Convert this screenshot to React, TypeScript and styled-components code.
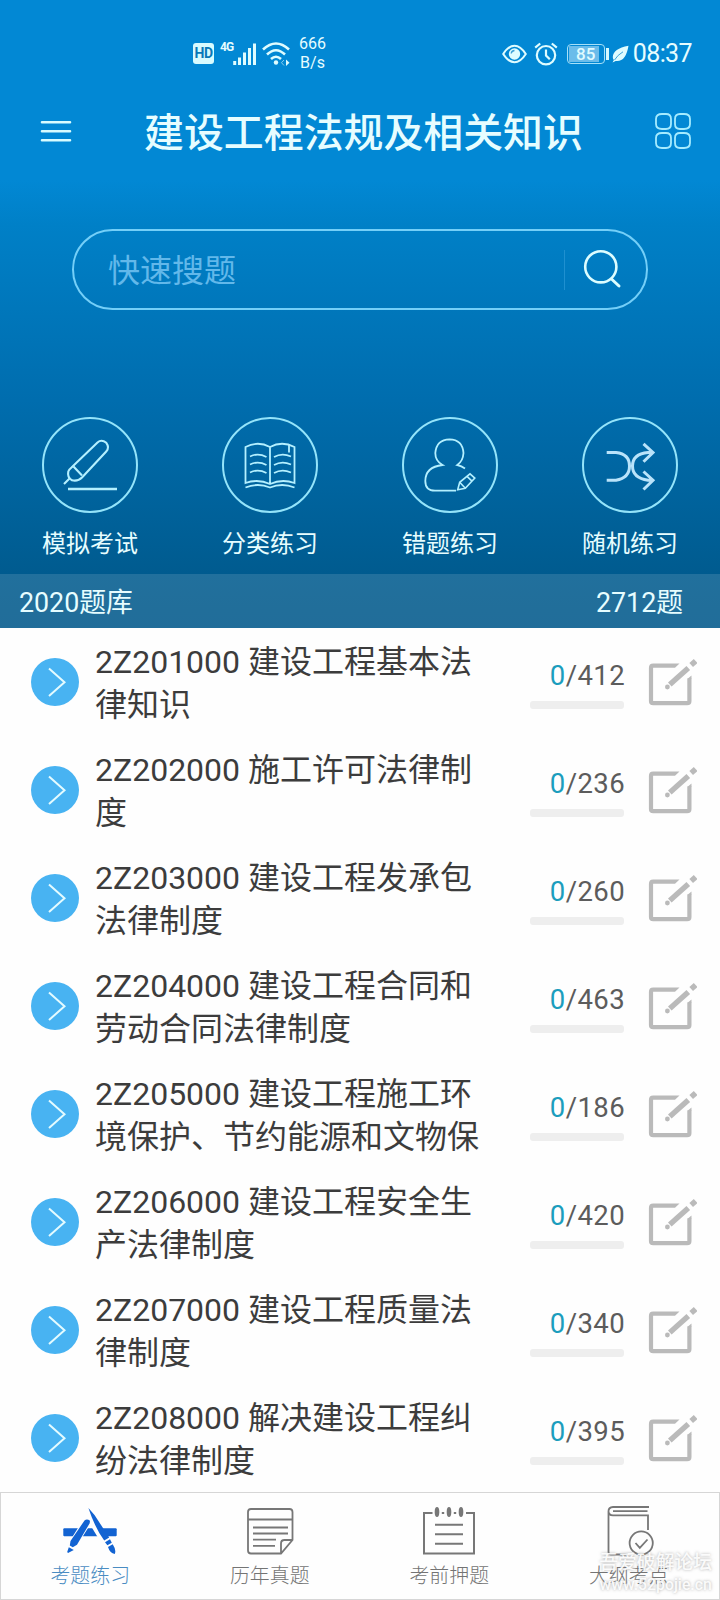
import React from 'react';
import styled, { createGlobalStyle } from 'styled-components';

const Global = createGlobalStyle`
  * { box-sizing: border-box; }
  body { margin: 0; background: #fff; font-family: Roboto, 'Noto Sans CJK SC', sans-serif; }
`;

const Screen = styled.div`
  width: 720px;
  height: 1600px;
  display: flex;
  flex-direction: column;
  overflow: hidden;
  background: #fefefe;
`;

const Hero = styled.header`
  height: 628px;
  flex: none;
  display: flex;
  flex-direction: column;
  color: #e6fdff;
  background: linear-gradient(#0288d4 0, #0288d4 180px, #0080c7 225px, #006dae 400px, #005b8f 574px, #00588a 628px);
`;

const StatusBar = styled.div`
  height: 104px;
  padding: 3px 28px 0 193px;
  display: flex;
  align-items: center;
  justify-content: space-between;
`;

const StatusGroup = styled.div`
  display: flex;
  align-items: center;
`;

const HdBadge = styled.span`
  width: 21px;
  height: 21px;
  border-radius: 3px;
  background: #d8fbff;
  color: #0878b8;
  font-size: 14px;
  font-weight: 700;
  line-height: 21px;
  text-align: center;
  letter-spacing: -0.6px;
`;

const NetType = styled.span`
  width: 13px;
  margin: -14px 0 0 6px;
  font-size: 12px;
  font-weight: 700;
  line-height: 12px;
  letter-spacing: -0.8px;
`;

const Speed = styled.span`
  margin-left: 9px;
  margin-top: -1px;
  font-size: 16px;
  line-height: 19px;
  text-align: center;
`;

const Battery = styled.span`
  width: 38px;
  height: 20px;
  margin-left: 9px;
  border: 1.5px solid #a6e0f8;
  border-radius: 4px;
  padding: 1px;
  display: flex;
`;

const BatteryLevel = styled.span`
  width: 30px;
  padding-left: 4px;
  background: #6bbcea;
  color: #e0fbff;
  font-size: 17px;
  font-weight: 500;
  line-height: 16px;
  text-align: center;
`;

const BatteryTip = styled.span`
  width: 3px;
  height: 12px;
  margin-left: 1px;
  background: #d4f8ff;
`;

const Clock = styled.span`
  margin-left: 4px;
  font-size: 25px;
  line-height: 30px;
  padding-top: 1px;
  letter-spacing: -0.6px;
`;

const TitleBar = styled.div`
  height: 56px;
  padding: 0 29px 0 40px;
  display: flex;
  align-items: center;
  justify-content: space-between;
`;

const Title = styled.h1`
  margin: 0;
  padding-top: 3px;
  font-size: 39.9px;
  font-weight: 500;
  line-height: 56px;
`;

const SearchBox = styled.div`
  width: 576px;
  height: 81px;
  margin: 69px 72px 0;
  padding-left: 34px;
  border: 2px solid #74cff8;
  border-radius: 41px;
  display: flex;
  align-items: center;
`;

const Placeholder = styled.span`
  flex: 1;
  padding-top: 2px;
  color: #62b8ea;
  font-size: 32px;
  line-height: 40px;
`;

const Divider = styled.i`
  width: 1px;
  height: 40px;
  background: #1f90d0;
  margin-right: 17px;
`;

const Actions = styled.div`
  margin-top: 107px;
  height: 157px;
  display: grid;
  grid-template-columns: repeat(4, 1fr);
`;

const Action = styled.div`
  display: flex;
  flex-direction: column;
  align-items: center;
  font-size: 24px;
  line-height: 36px;
  gap: 13px;
`;

const Ring = styled.div`
  width: 96px;
  height: 96px;
  border: 2px solid #94e4fa;
  border-radius: 50%;
  svg { display: block; margin: -2px; }
`;

const Summary = styled.div`
  height: 54px;
  padding: 0 37px 2px 19px;
  display: flex;
  align-items: center;
  justify-content: space-between;
  font-size: 26.8px;
  background: rgba(255, 255, 255, 0.13);
`;

const List = styled.main`
  flex: none;
  height: 864px;
`;

const Row = styled.div`
  height: 108px;
  padding: 0 23px 0 31px;
  display: flex;
  align-items: center;
`;

const Bullet = styled.span`
  width: 48px;
  height: 48px;
  flex: none;
  border-radius: 50%;
  background: #48b3f2;
  svg { display: block; }
`;

const Chapter = styled.div`
  width: 390px;
  margin-left: 16px;
  padding-top: 3px;
  color: #3c3c3c;
  font-size: 32px;
  line-height: 42.5px;
  white-space: pre-line;
`;

const Progress = styled.div`
  width: 94px;
  margin: 0 23px 0 45px;
  padding-top: 5px;
  display: flex;
  flex-direction: column;
  align-items: flex-end;
  gap: 9px;
`;

const Count = styled.div`
  margin-right: -1px;
  color: #5c5c5c;
  font-size: 27.5px;
  line-height: 32px;
  letter-spacing: 0.4px;
  b { color: #1c9dbd; font-weight: 400; }
`;

const Track = styled.div`
  width: 94px;
  height: 8px;
  border-radius: 3px;
  background: #eeeeee;
`;

const TabBar = styled.nav`
  position: relative;
  height: 108px;
  border: 1px solid #d6d6d6;
  background: #fefefe;
  display: grid;
  grid-template-columns: repeat(4, 1fr);
`;

const Tab = styled.div<{ $active?: boolean }>`
  padding: 13px 1px 0 0;
  display: flex;
  flex-direction: column;
  align-items: center;
  gap: 6px;
  color: ${p => (p.$active ? '#4a8cc2' : '#747474')};
  font-size: 19.9px;
  font-weight: 300;
  line-height: 30px;
  svg { display: block; flex: none; }
`;

const Watermark = styled.div`
  position: absolute;
  right: 7px;
  bottom: 4px;
  color: rgba(255, 255, 255, 0.92);
  font-size: 18.8px;
  font-weight: 500;
  line-height: 21px;
  text-align: center;
  text-shadow: 0 0 3px rgba(130, 130, 130, 0.65);
  small { display: block; font-size: 15.8px; }
`;

const SignalIcon = () => (
  <svg width="24" height="24" viewBox="0 0 24 24" stroke="#dffcff" strokeWidth="3">
    <path d="M1.7 19v4M6.5 15.5V23M11.5 10.5V23M16.5 6V23M21.5 1.5V23" />
  </svg>
);

const WifiIcon = () => (
  <svg width="28" height="24" viewBox="0 0 28 24" fill="none" stroke="#dffcff" strokeWidth="2.6" style={{ marginLeft: 5 }}>
    <path d="M1 7.5Q14-4.5 27 7.5M5 12.5Q14 4 23 12.5M9 17Q14 12.5 19 17" />
    <circle cx="14" cy="20.5" r="2.2" fill="#dffcff" stroke="none" />
    <path d="M24 17.5l3.5 3.2-3.5 3.2z" fill="#dffcff" stroke="none" />
    <path d="M22 18l-2.5 2.7L22 23.5" strokeWidth="1" opacity=".6" />
  </svg>
);

const EyeIcon = () => (
  <svg width="25" height="20" viewBox="0 0 25 20" fill="none" stroke="#dffcff" strokeWidth="2">
    <path d="M1.2 10Q6.5 1.7 12.5 1.7T23.8 10Q18.5 18.3 12.5 18.3T1.2 10Z" />
    <circle cx="12.5" cy="10" r="5.7" fill="#dffcff" stroke="none" />
    <path d="M12.5 6.5a3.5 3.5 0 0 0-3.3 3" stroke="#3d9fd6" strokeWidth="1.3" />
  </svg>
);

const AlarmIcon = () => (
  <svg width="24" height="24" viewBox="0 0 24 24" fill="none" stroke="#dffcff" strokeWidth="2.2" style={{ marginLeft: 7 }}>
    <circle cx="12" cy="13.2" r="9.2" />
    <path d="M1.2 5.7l5-4.2M17.8 1.5l5 4.2M12 7.5v6l3.8 3.8" />
  </svg>
);

const LeafIcon = () => (
  <svg width="17" height="18" viewBox="0 0 17 18" style={{ marginLeft: 3 }}>
    <path d="M16.5.7Q1 3.5.8 12q0 2.2 1.1 3L.5 17.4l3.2-1.5Q13.8 17.3 16.5.7Z" fill="#dffcff" />
    <path d="M2.5 15Q5.5 10 11 6.8" stroke="#3aa2da" fill="none" />
  </svg>
);

const MenuIcon = () => (
  <svg width="32" height="24" viewBox="0 0 32 24" stroke="#d8fcff" strokeWidth="2.6" strokeLinecap="round">
    <path d="M2 2.3h28M2 11.3h28M2 20.3h28" />
  </svg>
);

const GridIcon = () => (
  <svg width="36" height="36" viewBox="0 0 36 36" fill="none" stroke="#a5ecff" strokeWidth="1.8" style={{ marginTop: -3 }}>
    <path d="M7 1h4q5 0 5 5v5q0 5-5 5H7q-6 0-6-5V6q0-5 6-5ZM25 1h4q6 0 6 5v5q0 5-6 5h-4q-5 0-5-5V6q0-5 5-5ZM7 20h4q5 0 5 5v5q0 5-5 5H7q-6 0-6-5v-5q0-5 6-5ZM25 20h4q6 0 6 5v5q0 5-6 5h-4q-5 0-5-5v-5q0-5 5-5Z" />
  </svg>
);

const SearchIcon = () => (
  <svg width="42" height="42" viewBox="0 0 42 42" fill="none" stroke="#dcfdff" strokeWidth="2.6" strokeLinecap="round" style={{ marginRight: 22 }}>
    <circle cx="18.8" cy="17.8" r="15.6" />
    <path d="M29.5 30L37 37" strokeWidth="3" />
  </svg>
);

const actionArt = {
  pen: (
    <g stroke="#b4f0ff" strokeWidth="2.1">
      <path d="M55.5 25.5Q59.5 21.8 64.3 25.8Q67.8 30.5 64.2 34.5L40 60.5Q36 64.6 30 63.3Q25 60.5 26.3 54.5Q27 52.5 29.5 50.5Z" />
      <path d="M31.5 49.5L40 58.5M27.5 61.5L22 67" />
      <path d="M26 72h49" strokeWidth="2.3" />
    </g>
  ),
  book: (
    <g stroke="#b4f0ff" strokeWidth="1.8">
      <path d="M23.5 30Q36 23.5 48 30Q60 23.5 72.5 30V66Q60 61.5 48 67Q36 61.5 23.5 66ZM48 30V67M23.5 70.5Q36 65.5 48 70.5Q60 65.5 72.5 70.5" />
      <path d="M28 39.5Q36 35.5 44.5 40M28 47.5Q36 43.5 44.5 48M28 55.5Q36 51.5 44.5 56M52 40Q60 35.5 69 39.5M52 48Q60 43.5 69 47.5M52 56Q60 51.5 69 55.5M67 28v7.5" />
    </g>
  ),
  person: (
    <g stroke="#b4f0ff" strokeWidth="1.8">
      <path d="M54 73.7H33Q23.3 73.7 23.3 64Q23.3 50 40.5 48Q33.3 44 33.3 36Q34.5 22.5 47.5 22.3Q60.5 22.5 61.5 36Q61 44 55.3 48Q59.5 49 63 51.5" />
      <path d="M55.7 72.8l2-7.5L68 56.8l4.8 4.3-9.5 10.2ZM57.7 65.3l5.6 6M65 59.3l5 4.8" strokeWidth="1.6" />
    </g>
  ),
  shuffle: (
    <g stroke="#b9e3fa" strokeWidth="3">
      <path d="M24.7 35.5H34Q47.5 37 47.5 49T34 63.2H24.7M70.5 35.5H66Q50.5 37 50.5 49T66 63.2H70.5M61.5 26.8L71 35.5L61.5 44.8M61.5 54.5L71 63.2L61.5 72.5" />
    </g>
  ),
};

const tabArt = {
  app: (
    <>
      <path d="M2.3 22.3h51.4q1 0 1 1v6q0 1-1 1H2.3q-1 0-1-1v-6q0-1 1-1Z" fill="#1263d2" />
      <path d="M26 14L8.5 42M28.5 11L48.5 44" stroke="#fefefe" strokeWidth="8.6" />
      <path d="M22.5 14.5q2.5-2.2 5.5.3l-.3 2.4L15 38.7l-4.2 2.5-3-1.8.7-4.4ZM6.8 41.2l5 2.8L6 47l-.8-1Z" fill="#1263d2" />
      <path d="M26.4 2L32.5 9L47.2 31.5L42.2 34.5Q33 22 26.4 2ZM43 36.3l5-3 1.8 3.4-4.4 2.6ZM46 41l4.7-2.8Q54.5 44 52.8 47.9Q48 47.5 46 41Z" fill="#1263d2" />
    </>
  ),
  note: (
    <g stroke="#777" strokeWidth="1.8">
      <path d="M39 47.5H9q-3 0-3-3V6q0-3 3-3h38.5q3 0 3 3v28ZM6 13.5h44.5M39 47.5V37.5q0-3.5 3.5-3.5h8" />
      <path d="M11 21.5h35M11 27.5h35M11 33.7h23M11 39.8h22" />
    </g>
  ),
  pad: (
    <g stroke="#777" strokeWidth="2">
      <path d="M11.5 7H3V47.5H53V7H45M14 18.7h28M14 28.3h28M14 37.7h28" />
      <path d="M20.8 7h2.4M32.8 7h2.4" />
      <g fill="#777" stroke="none">
        <ellipse cx="16" cy="6" rx="2.3" ry="5" />
        <ellipse cx="28" cy="6" rx="2.3" ry="5" />
        <ellipse cx="40" cy="6" rx="2.3" ry="5" />
      </g>
    </g>
  ),
  outline: (
    <g stroke="#777" strokeWidth="1.8">
      <path d="M48 1H12Q7.5 1.2 7.5 5.2T12 9.3H47V24M7.5 5V46Q7.5 48.5 10 48.5H27M12 5.2H46.5" />
      <circle cx="40.2" cy="37" r="11.6" />
      <path d="M34.5 37l4.3 4.8L46.5 33.5" />
    </g>
  ),
};

const actions = [
  { art: actionArt.pen, label: '模拟考试' },
  { art: actionArt.book, label: '分类练习' },
  { art: actionArt.person, label: '错题练习' },
  { art: actionArt.shuffle, label: '随机练习' },
];

const chapters = [
  { name: '2Z201000 建设工程基本法\n律知识', total: 412 },
  { name: '2Z202000 施工许可法律制\n度', total: 236 },
  { name: '2Z203000 建设工程发承包\n法律制度', total: 260 },
  { name: '2Z204000 建设工程合同和\n劳动合同法律制度', total: 463 },
  { name: '2Z205000 建设工程施工环\n境保护、节约能源和文物保', total: 186 },
  { name: '2Z206000 建设工程安全生\n产法律制度', total: 420 },
  { name: '2Z207000 建设工程质量法\n律制度', total: 340 },
  { name: '2Z208000 解决建设工程纠\n纷法律制度', total: 395 },
];

const tabs = [
  { art: tabArt.app, label: '考题练习' },
  { art: tabArt.note, label: '历年真题' },
  { art: tabArt.pad, label: '考前押题' },
  { art: tabArt.outline, label: '大纲考点' },
];

const EditIcon = () => (
  <svg width="50" height="50" viewBox="0 0 50 50" fill="none" stroke="#bababa" strokeWidth="4.2">
    <path d="M28 8.7H6.2Q4 8.7 4 10.9V44Q4 46.2 6.2 46.2H40.2Q42.4 46.2 42.4 44V21.5" />
    <path d="M32.5 6.6H28v4.2ZM44.5 18.5V22H40.3Z" fill="#bababa" stroke="none" />
    <path d="M22.8 27.6L41.3 10.9" strokeWidth="5.4" />
    <path d="M44.2 8L48.6 4" strokeWidth="5.4" />
    <circle cx="20.4" cy="30" r="2.4" fill="#bababa" stroke="none" />
  </svg>
);

export default function App() {
  return (
    <Screen>
      <Global />
      <Hero>
        <StatusBar>
          <StatusGroup>
            <HdBadge>HD</HdBadge>
            <NetType>4G</NetType>
            <SignalIcon />
            <WifiIcon />
            <Speed>666<br />B/s</Speed>
          </StatusGroup>
          <StatusGroup>
            <EyeIcon />
            <AlarmIcon />
            <Battery><BatteryLevel>85</BatteryLevel></Battery>
            <BatteryTip />
            <LeafIcon />
            <Clock>08:37</Clock>
          </StatusGroup>
        </StatusBar>
        <TitleBar>
          <MenuIcon />
          <Title>建设工程法规及相关知识</Title>
          <GridIcon />
        </TitleBar>
        <SearchBox>
          <Placeholder>快速搜题</Placeholder>
          <Divider />
          <SearchIcon />
        </SearchBox>
        <Actions>
          {actions.map(a => (
            <Action key={a.label}>
              <Ring><svg width="96" height="96" viewBox="0 0 96 96" fill="none">{a.art}</svg></Ring>
              {a.label}
            </Action>
          ))}
        </Actions>
        <Summary><span>2020题库</span><span>2712题</span></Summary>
      </Hero>
      <List>
        {chapters.map(c => (
          <Row key={c.name}>
            <Bullet>
              <svg width="48" height="48" viewBox="0 0 48 48" fill="none" stroke="#e4fbff" strokeWidth="2">
                <path d="M18 10.5L33.5 24.3L18 38" />
              </svg>
            </Bullet>
            <Chapter>{c.name}</Chapter>
            <Progress>
              <Count><b>0</b>/{c.total}</Count>
              <Track />
            </Progress>
            <EditIcon />
          </Row>
        ))}
      </List>
      <TabBar>
        {tabs.map((t, i) => (
          <Tab key={t.label} $active={i === 0}>
            <svg width="56" height="50" viewBox="0 0 56 50" fill="none">{t.art}</svg>
            {t.label}
          </Tab>
        ))}
        <Watermark>吾爱破解论坛<small>www.52pojie.cn</small></Watermark>
      </TabBar>
    </Screen>
  );
}
